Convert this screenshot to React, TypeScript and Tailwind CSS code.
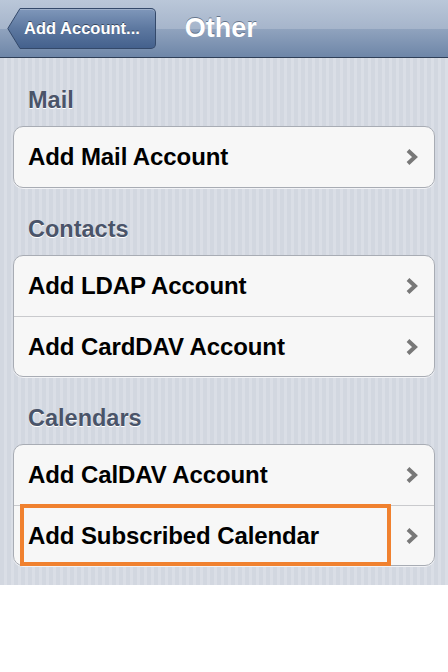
import { ReactNode } from "react";

const Chevron = () => (
  <svg width="14" height="18" viewBox="0 0 14 18" className="shrink-0">
    <path
      d="M3 2.5 L10 9 L3 15.5"
      fill="none"
      stroke="#787878"
      strokeWidth="4"
      strokeLinecap="butt"
      strokeLinejoin="miter"
    />
  </svg>
);

const Row = ({
  label,
  first,
  children,
}: {
  label: string;
  first?: boolean;
  children?: ReactNode;
}) => (
  <div
    className={`relative flex h-[60px] items-center justify-between pl-[14px] pr-[15px] ${
      first ? "" : "border-t border-[#c9cacd]"
    }`}
  >
    <span className="text-[24px] font-bold tracking-[-0.1px] text-black">
      {label}
    </span>
    <Chevron />
    {children}
  </div>
);

const Section = ({
  title,
  rows,
  highlight,
}: {
  title: string;
  rows: string[];
  highlight?: number;
}) => (
  <div>
    <h2 className="mx-[28px] mt-[28px] mb-[13px] h-[26px] text-[23.5px] leading-[26px] font-bold text-[#4a5469] [text-shadow:0_1px_0_#ffffff]">
      {title}
    </h2>
    <div className="mx-[13px] rounded-[10px] border border-[#a8acb4] bg-[#f7f7f7] shadow-[0_1px_0_#f2f3f6]">
      {rows.map((r, i) => (
        <Row key={r} label={r} first={i === 0}>
          {highlight === i && (
            <div className="pointer-events-none absolute top-[-2px] bottom-[-1px] left-[6px] w-[371px] border-[4px] border-[#f0812f]" />
          )}
        </Row>
      ))}
    </div>
  </div>
);

const BackButton = () => (
  <div className="flex h-[41px] items-stretch">
    <svg width="14" height="41" viewBox="0 0 14 41" className="shrink-0 -mr-px">
      <defs>
        <linearGradient id="bb" x1="0" y1="0" x2="0" y2="1">
          <stop offset="0" stopColor="#7f97ba" />
          <stop offset="0.5" stopColor="#5d78a0" />
          <stop offset="1" stopColor="#44618d" />
        </linearGradient>
      </defs>
      <path d="M14 0.5 L13 0.5 L0.8 20.5 L13 40.5 L14 40.5 Z" fill="url(#bb)" />
      <path
        d="M14 0.5 L13 0.5 L0.8 20.5 L13 40.5 L14 40.5"
        fill="none"
        stroke="#34496a"
        strokeWidth="1"
      />
    </svg>
    <div className="flex items-center rounded-r-[5px] border-y border-r border-[#34496a] bg-[linear-gradient(180deg,#7f97ba_0%,#5d78a0_50%,#44618d_100%)] pr-[15px] pl-[4px] shadow-[inset_0_1px_0_rgba(255,255,255,0.25)]">
      <span className="text-[16.5px] font-bold text-white [text-shadow:0_-1px_0_rgba(0,0,0,0.45)]">
        Add Account...
      </span>
    </div>
  </div>
);

export default function App() {
  return (
    <div className="min-h-[672px] bg-white font-['Liberation_Sans',Arial,sans-serif]">
      <div className="flex h-[58px] items-center gap-[29px] border-b border-[#2f3f58] bg-[linear-gradient(180deg,#bac7d9_0%,#a6b5cb_50%,#90a3be_51%,#6e86a8_100%)] pl-[7px]">
        <BackButton />
        <span className="text-[27px] font-bold text-white [text-shadow:0_-1px_0_rgba(40,55,80,0.55)]">
          Other
        </span>
      </div>
      <div className="bg-[repeating-linear-gradient(90deg,#d2d7e0_0px,#d2d7e0_4px,#dadee6_4px,#dadee6_7px)] pb-[19px]">
        <div className="h-px" />
        <Section title="Mail" rows={["Add Mail Account"]} />
        <Section
          title="Contacts"
          rows={["Add LDAP Account", "Add CardDAV Account"]}
        />
        <Section
          title="Calendars"
          rows={["Add CalDAV Account", "Add Subscribed Calendar"]}
          highlight={1}
        />
      </div>
    </div>
  );
}
